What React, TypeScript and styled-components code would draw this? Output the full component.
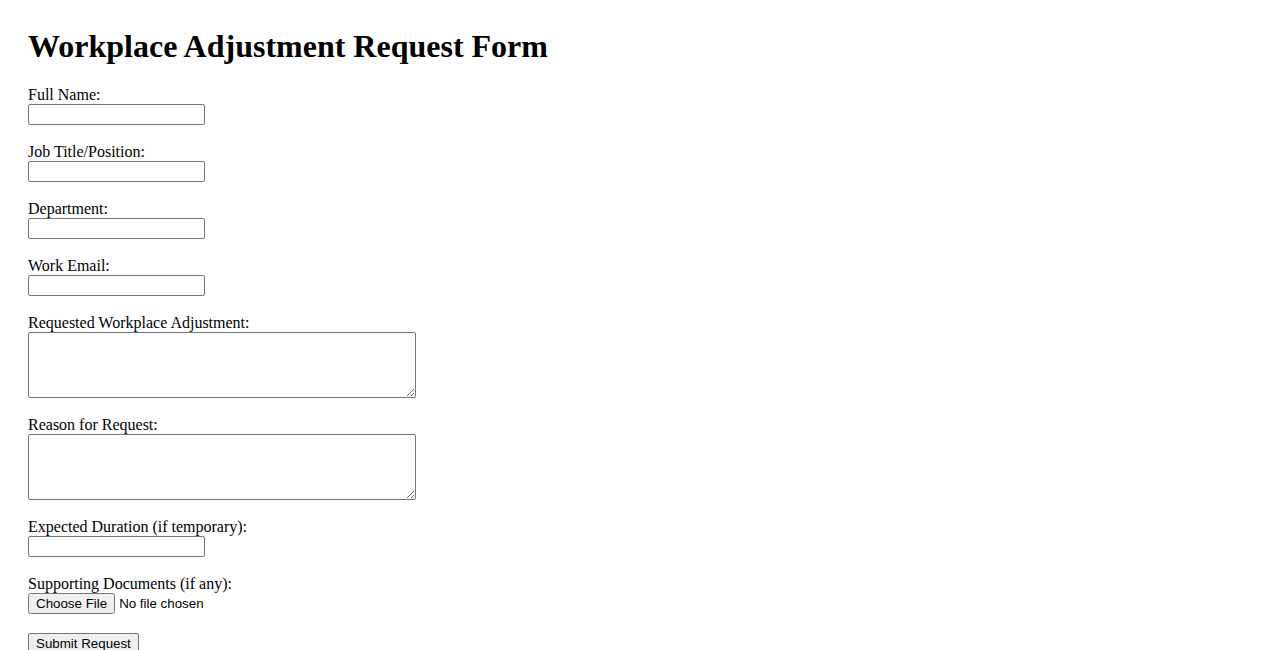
import React from "react";
import styled, { createGlobalStyle } from "styled-components";

const Global = createGlobalStyle`
  body {
    margin: 8px;
    background: #ffffff;
    color: #000000;
    font-family: "Liberation Serif", "Times New Roman", serif;
    font-size: 16px;
  }
`;

const Container = styled.div`
  padding: 20px;
`;

const Title = styled.h1`
  font-size: 32px;
  font-weight: bold;
  margin: 0 0 20.4px 0;
`;

const Form = styled.form`
  display: flex;
  flex-direction: column;
  align-items: flex-start;
`;

const Group = styled.div<{ $gap?: number }>`
  display: flex;
  flex-direction: column;
  align-items: flex-start;
  margin-bottom: ${(p) => p.$gap ?? 17}px;
`;

const Label = styled.label`
  display: block;
  line-height: 19px;
`;

const TextInput = styled.input`
  font-family: "Liberation Sans", Arial, sans-serif;
  font-size: 13.33px;
  width: 177px;
  height: 21px;
  box-sizing: border-box;
  border: 1px solid #767676;
  border-radius: 2px;
  padding: 1px 2px;
  margin: 0;
`;

const TextArea = styled.textarea`
  font-family: "Liberation Mono", monospace;
  font-size: 13.33px;
  width: 388px;
  height: 66px;
  box-sizing: border-box;
  border: 1px solid #767676;
  border-radius: 2px;
  padding: 2px;
  margin: 0;
`;

const FileInput = styled.input`
  font-family: "Liberation Sans", Arial, sans-serif;
  font-size: 13.33px;
  margin: 0;
  height: 21px;
`;

const SubmitButton = styled.button`
  font-family: "Liberation Sans", Arial, sans-serif;
  font-size: 13.33px;
  height: 21px;
  padding: 1px 7px;
  margin: 0;
  background: #efefef;
  border: 1px solid #767676;
  border-radius: 2px;
  color: #000;
`;

const fields: { id: string; label: string; kind: "input" | "area" }[] = [
  { id: "name", label: "Full Name:", kind: "input" },
  { id: "title", label: "Job Title/Position:", kind: "input" },
  { id: "dept", label: "Department:", kind: "input" },
  { id: "email", label: "Work Email:", kind: "input" },
  { id: "adjust", label: "Requested Workplace Adjustment:", kind: "area" },
  { id: "reason", label: "Reason for Request:", kind: "area" },
  { id: "duration", label: "Expected Duration (if temporary):", kind: "input" },
];

export default function App() {
  return (
    <>
      <Global />
      <Container>
        <Title>Workplace Adjustment Request Form</Title>
        <Form onSubmit={(e) => e.preventDefault()}>
          {fields.map((f) => (
            <Group key={f.id}>
              <Label htmlFor={f.id}>{f.label}</Label>
              {f.kind === "input" ? (
                <TextInput id={f.id} type={f.id === "email" ? "email" : "text"} />
              ) : (
                <TextArea id={f.id} />
              )}
            </Group>
          ))}
          <Group $gap={19}>
            <Label htmlFor="docs">Supporting Documents (if any):</Label>
            <FileInput id="docs" type="file" />
          </Group>
          <SubmitButton type="submit">Submit Request</SubmitButton>
        </Form>
      </Container>
    </>
  );
}
